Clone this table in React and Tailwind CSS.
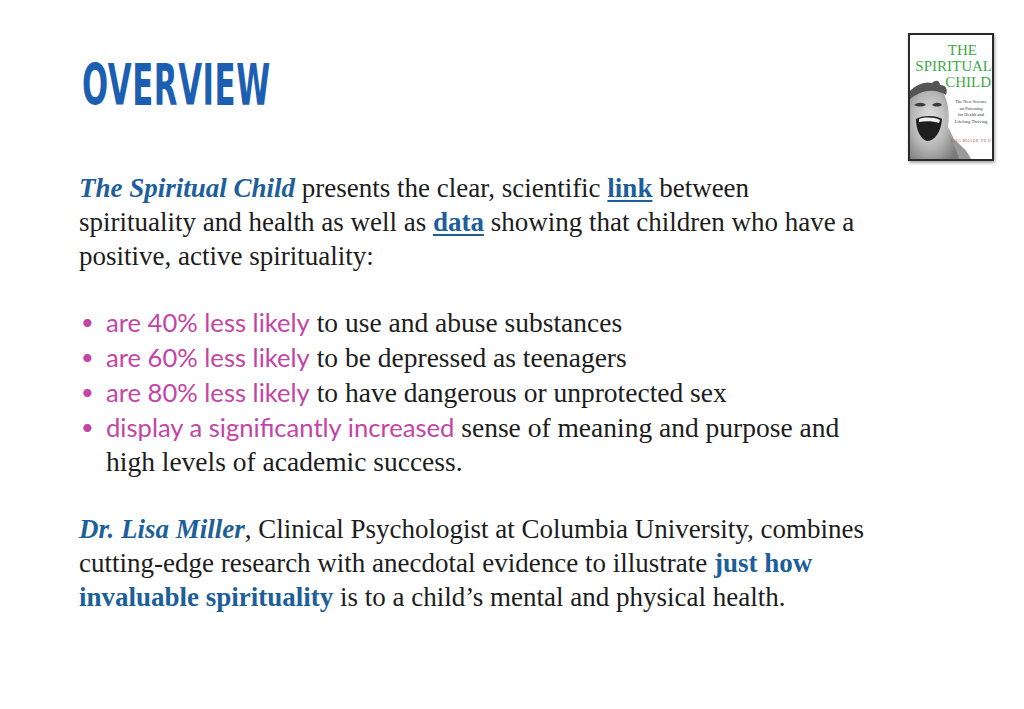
import React from "react";

const serif = { fontFamily: '"Liberation Serif", "DejaVu Serif", serif' };

function BookCover() {
  return (
    <div className="relative w-[86px] h-[128px] border-2 border-[#2a2a2a] bg-white overflow-hidden shadow-[1px_2px_3px_rgba(0,0,0,0.35)]">
      {/* child photo, drawn roughly in greyscale */}
      <svg className="absolute left-0 top-0" width="86" height="128" viewBox="0 0 86 128">
        <defs>
          <radialGradient id="face" cx="0.4" cy="0.45" r="0.65">
            <stop offset="0" stopColor="#e4e4e4" />
            <stop offset="0.55" stopColor="#b5b5b5" />
            <stop offset="1" stopColor="#7a7a7a" />
          </radialGradient>
        </defs>
        <path d="M0 56 C10 48 24 48 32 56 C38 64 40 78 38 92 C42 100 48 110 50 128 L0 128 Z" fill="url(#face)" />
        <path d="M0 56 C6 50 14 46 22 48 C26 44 30 46 30 50 C36 50 38 54 36 60 C30 56 20 54 10 58 C6 60 2 62 0 64 Z" fill="#555" />
        <path d="M4 70 C8 67 13 67 16 70 C12 72 8 72 4 70 Z" fill="#3b3b3b" />
        <path d="M22 70 C25 67 30 67 32 70 C29 72 25 72 22 70 Z" fill="#3b3b3b" />
        <path d="M6 84 C12 80 26 80 32 84 C31 98 24 106 17 106 C10 104 6 94 6 84 Z" fill="#1e1e1e" />
        <path d="M9 84 C15 82 24 82 30 85 L29 88 C23 86 15 86 9 87 Z" fill="#f2f2f2" />
        <path d="M38 100 C48 108 60 116 62 128 L50 128 C48 116 42 108 38 100 Z" fill="#999" />
      </svg>
      <div className="absolute right-[1px] top-[7px] flex flex-col items-end text-[#3fa84a] leading-[16px] text-[15px]" style={serif}>
        <span className="mr-[14px]">THE</span>
        <span className="-mr-[1px]">SPIRITUAL</span>
        <span>CHILD</span>
      </div>
      <div className="absolute left-[38px] top-[64px] w-[46px] flex flex-col items-center text-[4.5px] leading-[6.5px] text-[#333]" style={serif}>
        <span>The New Science</span>
        <span>on Parenting</span>
        <span>for Health and</span>
        <span>Lifelong Thriving</span>
      </div>
      <div className="absolute left-[40px] top-[104px] w-[44px] text-center text-[3.5px] tracking-[0.5px] text-[#b04040]" style={serif}>
        LISA MILLER, PH.D.
      </div>
    </div>
  );
}

function Bullet({ pink, rest, cont }) {
  return (
    <li className="flex">
      <span className="w-[27px] shrink-0 pl-[2px] text-[#c444a6] text-[22px]" style={{ fontFamily: "Lato, sans-serif" }}>•</span>
      <span className="text-[27.5px]">
        <span className="text-[#c444a6] text-[25.6px]" style={{ fontFamily: "Lato, sans-serif" }}>{pink}</span>{" "}
        {rest}
        {cont && (
          <>
            <br />
            {cont}
          </>
        )}
      </span>
    </li>
  );
}

export default function App() {
  return (
    <div className="w-[1024px] h-[709px] bg-white relative text-[#1c1c1c]" style={serif}>
      <div className="flex justify-between pl-[82px] pr-[30px] pt-[33px]">
        <h1
          className="mt-[29px] text-[#1c5fb2] text-[57px] leading-[46px] font-bold origin-left scale-x-[0.6] tracking-[1px] h-[46px]"
          style={{ fontFamily: '"Liberation Sans Narrow", "DejaVu Sans Condensed", "Liberation Sans", sans-serif' }}
        >
          OVERVIEW
        </h1>
        <BookCover />
      </div>

      <div className="pl-[79px] pr-[100px] mt-[10px] text-[27px] leading-[34px]">
        <p>
          <span className="italic font-bold text-[#1d5f9b]">The Spiritual Child</span> presents the clear, scientific{" "}
          <span className="font-bold text-[#1d5f9b] underline decoration-2 underline-offset-[3px]">link</span> between
          <br />
          spirituality and health as well as{" "}
          <span className="font-bold text-[#1d5f9b] underline decoration-2 underline-offset-[3px]">data</span> showing that children who have a
          <br />
          positive, active spirituality:
        </p>

        <ul className="mt-[32px] leading-[34px]">
          <Bullet pink="are 40% less likely" rest="to use and abuse substances" />
          <Bullet pink="are 60% less likely" rest="to be depressed as teenagers" />
          <Bullet pink="are 80% less likely" rest="to have dangerous or unprotected sex" />
          <Bullet
            pink="display a significantly increased"
            rest="sense of meaning and purpose and"
            cont="high levels of academic success."
          />
        </ul>

        <p className="mt-[33px]">
          <span className="italic font-bold text-[#1d5f9b]">Dr. Lisa Miller</span>, Clinical Psychologist at Columbia University, combines
          <br />
          cutting-edge research with anecdotal evidence to illustrate{" "}
          <span className="font-bold text-[#1d5f9b]">just how</span>
          <br />
          <span className="font-bold text-[#1d5f9b]">invaluable spirituality</span> is to a child’s mental and physical health.
        </p>
      </div>
    </div>
  );
}
